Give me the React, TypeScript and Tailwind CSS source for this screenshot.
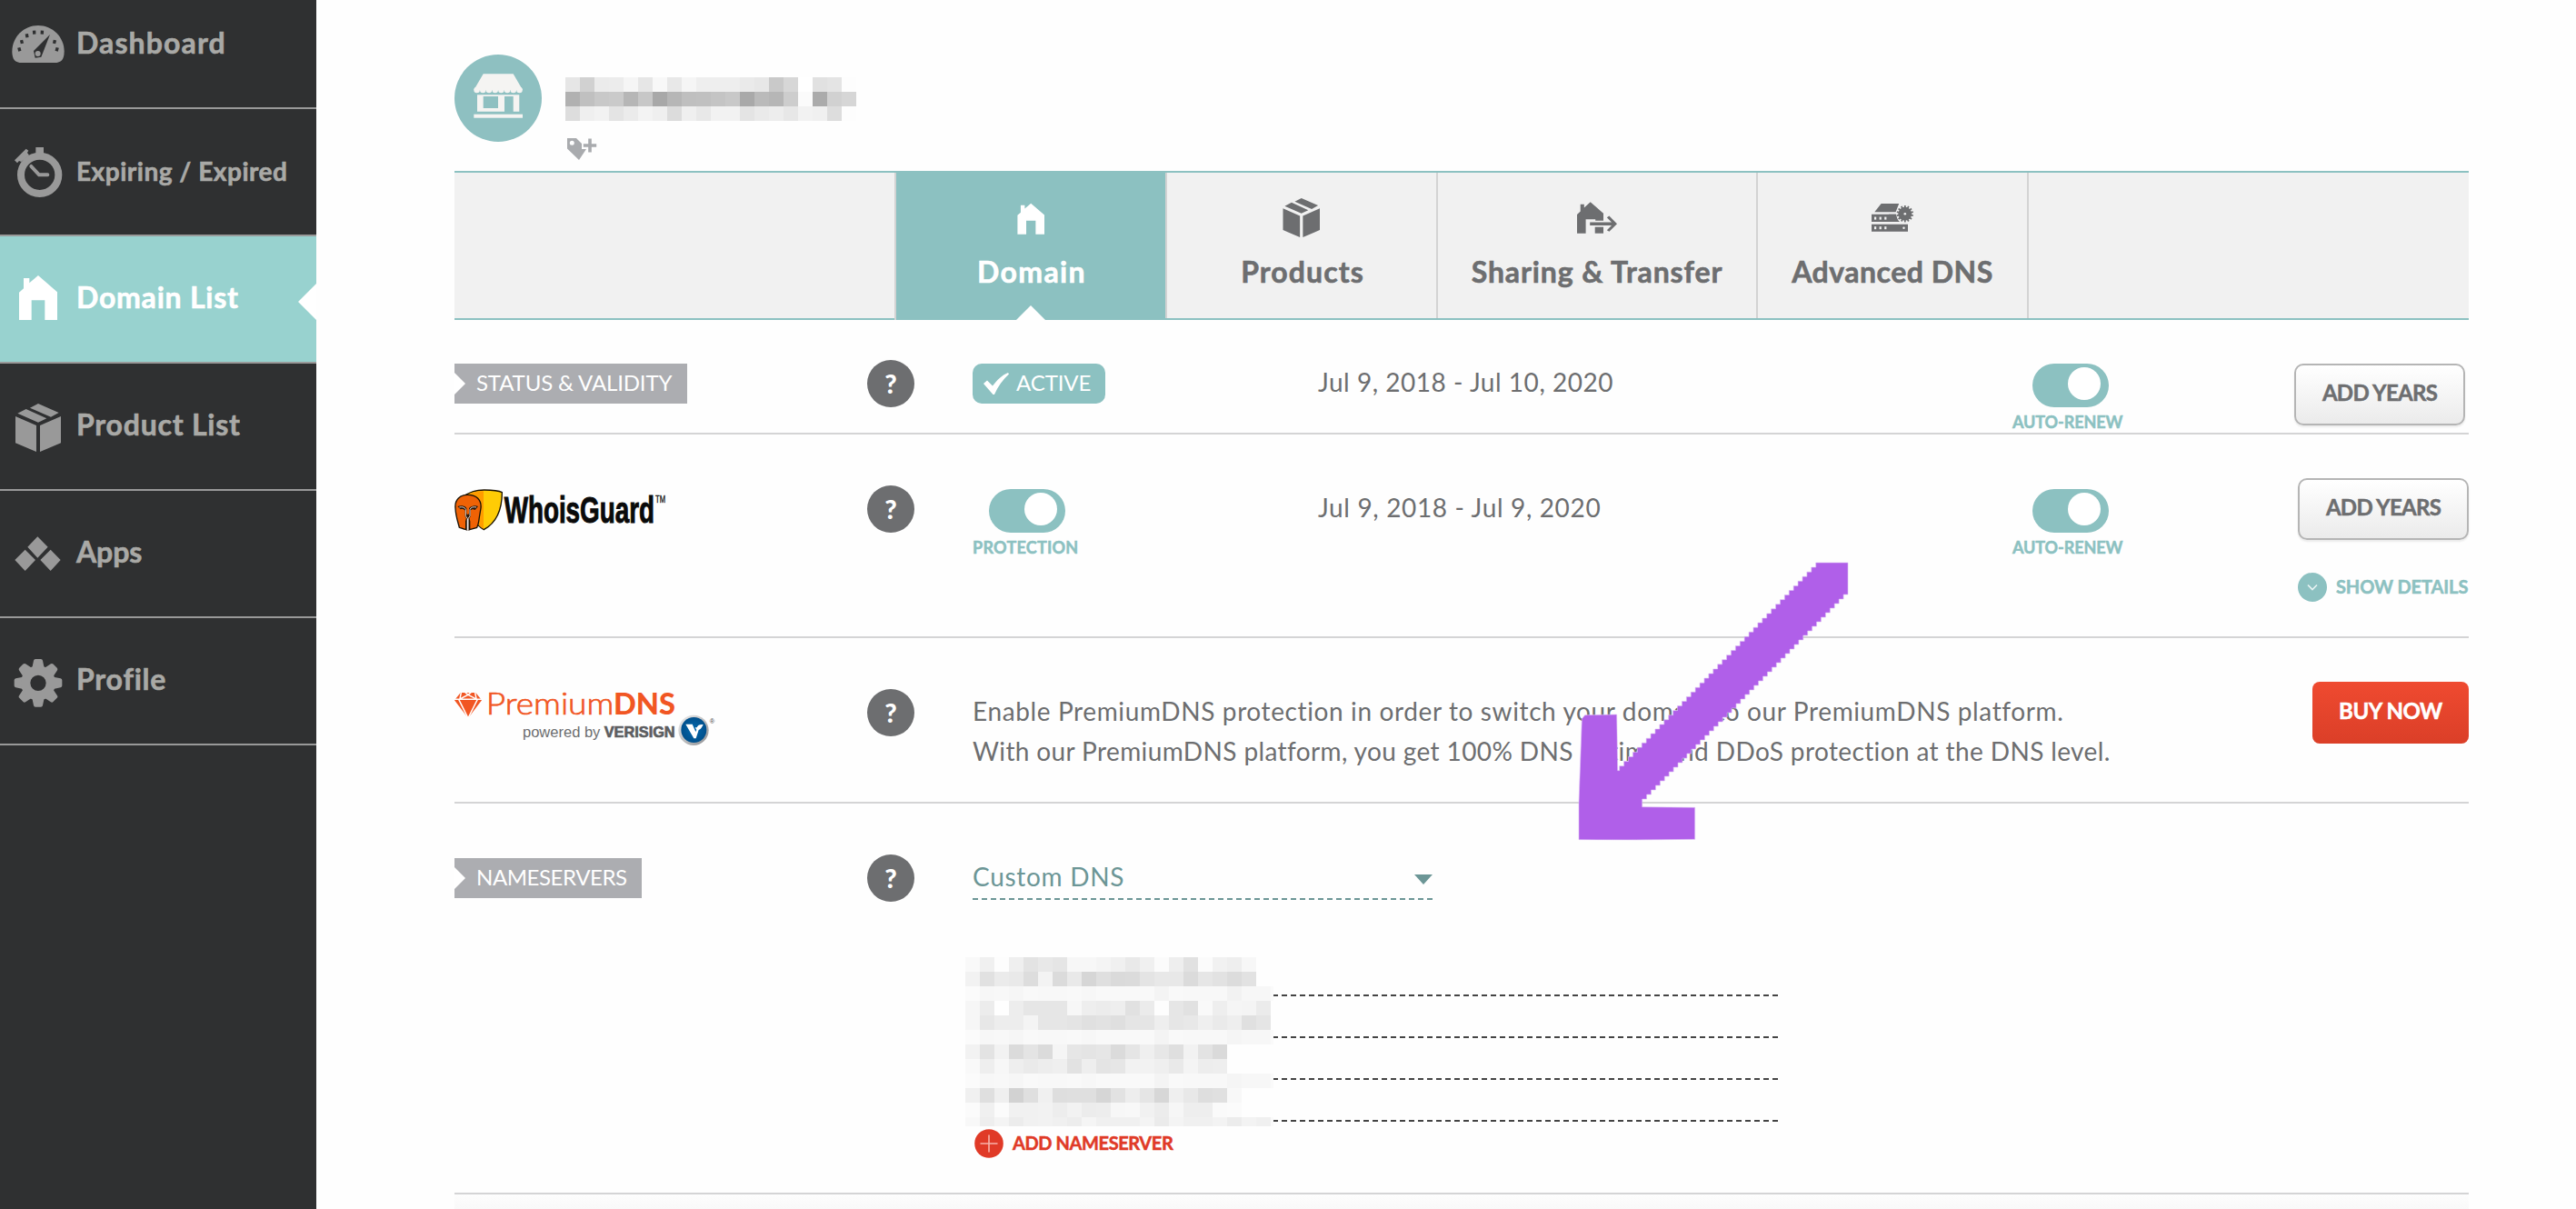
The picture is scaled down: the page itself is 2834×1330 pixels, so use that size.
import React from "react";

const HOUSE =
  "M126 909L189 964V1056H148V991H104V1056H63V965L78 952V918H97V934Z";
const CUBE =
  "M126 132L194 162L168 176L99 146ZM86 150L154 181L126 194L58 164ZM51 174L120 204V291L51 262ZM201 174L132 204V291L201 262Z";

function DashboardIcon() {
  const dots = [[64, 163], [72, 138], [89, 118], [113, 107], [139, 107], [180, 138], [188, 163]];
  return (
    <g transform="scale(.3333) translate(0 60)">
      <path fill="#999" d="M40 170C40 122 79 84 126 84S212 122 212 170C212 196 202 207 180 207H72C50 207 40 196 40 170Z" />
      {dots.map(([x, y], i) => (
        <rect key={i} x={x - 5} y={y - 6} width="10" height="12" fill="#2f3031" transform={`rotate(${(x - 126) * 0.25} ${x} ${y})`} />
      ))}
      <path fill="#2f3031" d="M165 114L111 168L116 191L136 188Z" />
      <circle cx="125" cy="177" r="9" fill="#999" />
    </g>
  );
}

function StopwatchIcon() {
  return (
    <g transform="scale(.3333) translate(0 -360)" fill="#999">
      <circle cx="131" cy="577" r="62" fill="none" stroke="#999" strokeWidth="24" />
      <rect x="118" y="486" width="26" height="24" />
      <path d="M86 491L94 497L90 504L96 512L70 534L63 531L57 538L48 529Z" />
      <path d="M103 549L129 577H157" fill="none" stroke="#999" strokeWidth="12" strokeLinecap="round" />
    </g>
  );
}

function GearIcon() {
  return (
    <g transform="scale(.3333) translate(0 -840)" fill="#999">
      {[0, 45, 90, 135, 180, 225, 270, 315].map((a) => (
        <path key={a} d="M106 1004L111 980Q112 975 117 975H135Q140 975 141 980L146 1004Z" transform={`rotate(${a} 126 1054)`} />
      ))}
      <circle cx="126" cy="1054" r="41.5" fill="none" stroke="#999" strokeWidth="31" />
    </g>
  );
}

type Item = { label: string; text: string; icon: React.ReactNode; active?: boolean };
const NAV: Item[] = [
  { label: "Dashboard", text: "text-[32px] tracking-[1.12px] pt-[47px]", icon: <DashboardIcon /> },
  { label: "Expiring / Expired", text: "text-[28px] tracking-[0.52px] pt-[48px]", icon: <StopwatchIcon /> },
  { label: "Domain List", text: "text-[32px] tracking-[0.77px] pt-[47px]", active: true, icon: <path d={HOUSE} fill="#fff" transform="scale(.3333) translate(0 -780)" /> },
  { label: "Product List", text: "text-[32px] tracking-[0.77px] pt-[47px]", icon: <path d={CUBE} fill="#999" transform="scale(.3333)" /> },
  {
    label: "Apps", text: "text-[32px] tracking-[-0.1px] pt-[47px]",
    icon: <path fill="#999" transform="scale(.3333) translate(0 -420)" d="M124 571L158 605L124 641L91 605ZM83 614L117 648L83 684L49 648ZM167 614L200 648L167 684L133 648Z" />,
  },
  { label: "Profile", text: "text-[32px] tracking-[0.8px] pt-[47px]", icon: <GearIcon /> },
];

function Sidebar() {
  return (
    <nav className="h-[1330px] w-[348px] shrink-0 overflow-hidden bg-[#2f3031]">
      <ul className="-mt-5">
        {NAV.map((n) => (
          <li
            key={n.label}
            className={
              n.active
                ? "relative flex h-[140px] border-b-2 border-[#999] bg-[#98d2cf] font-bold text-white [-webkit-text-stroke:0.6px]"
                : "relative flex h-[140px] border-b-2 border-[#999] font-bold text-[#a9a9a6] [-webkit-text-stroke:0.6px]"
            }
          >
            <svg width="84" height="138" className="shrink-0">{n.icon}</svg>
            <span className={`whitespace-nowrap leading-10 ${n.text}`}>{n.label}</span>
            {n.active && (
              <svg width="20" height="40" className="absolute right-0 top-[52px]">
                <path d="M20 0V40L0 20Z" fill="#fff" />
              </svg>
            )}
          </li>
        ))}
      </ul>
    </nav>
  );
}

const NAME_PIXELS = [
  "e6 d1 eb ec f5 e6 f8 e8 f5 ee ee ee ea e7 c9 d7 ff e1 e4 fd",
  "b1 c0 c8 ca b6 c7 a8 b6 bf c0 c4 c8 a9 ba b6 cd fb ab d1 d6",
  "dd ef f2 e4 eb f3 ef dc ef e8 f2 f2 e4 ea ed e7 f2 f0 dd fd",
];
const SERVER_PIXELS = [
  "f9 f0 fd ef e3 e8 e5 f7 f7 f4 f0 e9 f0 fb ee e1 fb f1 ee f7 fe fe",
  "f2 e1 eb e9 dd f3 db e9 d6 df da db e4 e8 e8 db e6 e2 dc e2 fe fe",
  "fb f7 f8 f6 f9 f8 f8 f9 f7 f9 f9 f9 f9 f4 f9 f8 f8 f8 f2 f7 f7 fa",
  "f6 ec fe ed e6 e6 e6 f7 ee ec ee e1 eb fd e6 e1 f9 ee f5 f4 eb fe",
  "f6 e7 ed ed f4 e6 e6 e4 e0 e2 df e5 e5 ee e6 e8 ef ea ee e0 e5 fe",
  "fb f7 f8 f6 f9 f8 f8 f9 f7 f9 f9 f9 f9 f4 f9 f8 f8 f8 f5 f7 f7 fa",
  "f2 e3 f2 db e4 db f5 e6 e4 e6 db e5 ef e7 df f2 e3 da fe fe fe fe",
  "f9 ee f7 ee ea ed ef e2 ee e4 e6 f2 f2 ef e9 f4 ed ee fe fe fe fe",
  "fb f7 f8 f6 f9 f8 f8 f9 f7 f9 f9 f9 f9 f4 f9 f8 f8 f8 f5 f7 f7 fa",
  "f0 df ef d2 df f0 de df df d6 e2 ed e5 d7 ef e8 de e0 f8 fe fe fe",
  "fb f0 fb f1 f1 f2 ed f2 ec ed f7 f8 f1 ec f6 ee ee fa fb fe fe fe",
  "f8 ee f4 ec f1 f2 f0 ed f5 f0 f0 f0 f4 eb f4 f0 f0 f3 ec f3 f0 fa",
];

function Mosaic({ rows }: { rows: string[] }) {
  return (
    <div>
      {rows.map((r, i) => (
        <div key={i} className="flex h-4">
          {r.split(" ").map((c, j) => (
            <span key={j} className="w-4 shrink-0" style={{ backgroundColor: `#${c}${c}${c}` }} />
          ))}
        </div>
      ))}
    </div>
  );
}

function StoreIcon() {
  const scallops = [0, 1, 2, 3, 4, 5, 6, 7];
  return (
    <svg width="96" height="96" className="rounded-full bg-[#8ec0c1]">
      <g fill="#f5f4f2">
        <path d="M31.7 21.3H64.7L75 39H21.3Z" />
        {scallops.map((i) => (
          <circle key={i} cx={24.6 + i * 6.7} cy="39" r="3.3" />
        ))}
        <path fillRule="evenodd" d="M25 44.3H71.3V62.7H64.7V46H55V62.7H25ZM31.7 46V59H48V46Z" />
        <rect x="21.3" y="65.7" width="53.7" height="4" />
      </g>
    </svg>
  );
}

function Header() {
  return (
    <header className="flex h-[188px] gap-[26px] pt-[60px]">
      <StoreIcon />
      <div className="pt-[25px]">
        <Mosaic rows={NAME_PIXELS} />
        <svg width="33" height="24" className="ml-[2px] mt-[19px]" fill="#a9abae">
          <path fillRule="evenodd" d="M0 0H10L16 6V12H21L13 24L0 11.5ZM5.3 2.8A2.5 2.5 0 1 0 5.3 7.8A2.5 2.5 0 1 0 5.3 2.8Z" />
          <path d="M23.2 .5H26.8V6.2H32.2V9.8H26.8V15.5H23.2V9.8H17.8V6.2H23.2Z" />
        </svg>
      </div>
    </header>
  );
}

function SharingIcon() {
  return (
    <g fill="#6d6e70">
      <path d="M16.7 6.3L31 18.7V26.7H22.2V25.3H11.6V40.7H2V20L5.7 16.5V8.7H9.8V12.5Z" />
      <path d="M16.2 28.4H40L34.8 23.2L37.4 21.6L46 30.2L37.4 38.8L34.8 37.2L40 32H16.2Z" />
      <rect x="21.7" y="33.7" width="9.3" height="7" />
    </g>
  );
}

function ServerIcon() {
  const teeth = Array.from({ length: 14 }, (_, i) => (i * 360) / 14);
  return (
    <g fill="#6d6e70">
      <path d="M11.6 8H31.2L27.6 17.3H4.3Z" />
      <path d="M1 19.7H29V28H1ZM1 30.7H41V38.7H1Z" />
      <circle cx="37.8" cy="19.2" r="10" fill="#f1f1f1" />
      <path d="M20 19.7H28Q28.6 25 32 28H20Z" />
      <circle cx="37.8" cy="19.2" r="7.4" />
      {teeth.map((a) => (
        <rect key={a} x="36.9" y="10" width="1.8" height="3" transform={`rotate(${a} 37.8 19.2)`} />
      ))}
      <g fill="#f1f1f1">
        {[4, 9.6, 15.2].map((x) => (
          <React.Fragment key={x}>
            <rect x={x} y="22.6" width="2.2" height="3" />
            <rect x={x} y="33.2" width="2.2" height="3" />
          </React.Fragment>
        ))}
        <circle cx="37.8" cy="19.2" r="1.3" />
        <circle cx="36.5" cy="34.7" r="1.2" />
      </g>
    </g>
  );
}

function Tab({ label, w, t, active, children }: { label: string; w: string; t: string; active?: boolean; children: React.ReactNode }) {
  return (
    <div className={`relative flex flex-col items-center border-l-2 border-[#d3d3d3] pt-[26px] font-bold [-webkit-text-stroke:0.6px] ${w} ${active ? "-mb-[2px] bg-[#8cc1c1] text-white" : "text-[#6d6e70]"}`}>
      <svg width="48" height="48">{children}</svg>
      <span className={`mt-[15px] whitespace-nowrap text-[32px] leading-10 ${t}`}>{label}</span>
      {active && (
        <svg width="32" height="16" className="absolute bottom-0 left-[132px]">
          <path d="M16 0L32 16H0Z" fill="#fff" />
        </svg>
      )}
    </div>
  );
}

function Tabs() {
  return (
    <div className="flex h-[164px] border-y-2 border-[#8cc1c1] bg-[#f1f1f1]">
      <div className="w-[484px]" />
      <Tab label="Domain" w="w-[298px]" t="pl-[2px] tracking-[1.38px]" active>
        <path d={HOUSE} fill="#fff" transform="translate(9.4 7.7) scale(.235 .232) translate(-63 -909)" />
      </Tab>
      <Tab label="Products" w="w-[298px]" t="pl-[2px] tracking-[1.08px]">
        <path d={CUBE} fill="#6d6e70" transform="translate(3.5 2) scale(.27) translate(-51 -132)" />
      </Tab>
      <Tab label="Sharing & Transfer" w="w-[352px]" t="tracking-[0.9px]"><SharingIcon /></Tab>
      <Tab label="Advanced DNS" w="w-[298px]" t="tracking-[0.5px]"><ServerIcon /></Tab>
      <div className="flex-1 border-l-2 border-[#d3d3d3]" />
    </div>
  );
}

function Ribbon({ label, w, t }: { label: string; w: string; t: string }) {
  return (
    <div className={`relative h-11 whitespace-nowrap bg-[#acadb1] text-2xl/[42px] text-white ${w} ${t}`}>
      {label}
      <svg width="12" height="24" className="absolute left-0 top-[10px]">
        <path d="M0 0L12 12L0 24Z" fill="#fff" />
      </svg>
    </div>
  );
}

function Help() {
  return (
    <div className="flex size-[52px] items-center justify-center rounded-full bg-[#6d6e70] text-[29px]/[52px] font-black text-white">
      <span className="-mt-px">?</span>
    </div>
  );
}

function Toggle({ label, ml, t }: { label: string; ml: string; t: string }) {
  return (
    <div>
      <div className={`flex h-12 w-[84px] justify-end rounded-full bg-[#8cc1c1] pr-[9px] pt-1 ${ml}`}>
        <div className="size-9 rounded-full bg-white" />
      </div>
      <div className={`mt-1 whitespace-nowrap text-[18px] leading-6 font-bold text-[#8cc1c1] [-webkit-text-stroke:0.5px] ${t}`}>{label}</div>
    </div>
  );
}

function AddYears() {
  return (
    <button className="block h-[68px] w-[188px] rounded-[10px] border-2 border-[#b5b5b5] bg-linear-to-b from-white to-[#ebebeb] pb-[5px] text-2xl/[58px] font-bold tracking-[-0.72px] whitespace-nowrap text-[#6d6e70] shadow-[0_2px_2px_rgba(0,0,0,0.08)] [-webkit-text-stroke:0.5px]">
      ADD YEARS
    </button>
  );
}

function WhoisGuardLogo() {
  return (
    <svg width="240" height="50" viewBox="0 0 720 150" className="overflow-visible">
      <g transform="translate(-30 -39)">
        <path d="M67 58C82 50 96 42 128 42C155 42 176 44 187 50C187 96 177 145 127 173C104 160 70 120 67 58Z" fill="#ffcc05" stroke="#1a1205" strokeWidth="4" />
        <path d="M70 60C84 52 100 46 126 46V170C104 160 74 118 70 60Z" fill="#ff9c00" />
        <path d="M33 102C30 74 48 58 74 58C102 58 120 74 117 102L112 132C110 150 108 158 104 166L80 173V146L76 130H72L68 146V173L46 166C44 156 34 130 33 102Z" fill="#ef6205" stroke="#1a1205" strokeWidth="4" />
        <path d="M40 96C54 92 64 94 70 102V120L74 124L78 120V102C86 94 98 92 108 96L98 108C90 104 86 106 83 110V130L74 142L65 130V110C60 104 56 104 50 106Z" fill="#2a1608" />
        <path d="M46 99C56 97 64 99 67 106V128L74 138L81 128V106C84 99 92 97 102 99" fill="none" stroke="#d9d4cf" strokeWidth="3" />
        <path d="M74 138V176" stroke="#2a1608" strokeWidth="9" />
        <path d="M74 138V176" stroke="#eee" strokeWidth="5" />
        <text x="194" y="151" fontFamily="Liberation Sans" fontWeight="bold" fontSize="122" textLength="496" lengthAdjust="spacingAndGlyphs" fill="#0a0a0a" stroke="#0a0a0a" strokeWidth="3">WhoisGuard</text>
        <text x="693" y="85" fontFamily="Liberation Sans" fontSize="32" textLength="33" lengthAdjust="spacingAndGlyphs" fill="#111" stroke="#111">TM</text>
      </g>
    </svg>
  );
}

function PremiumLogo() {
  return (
    <svg width="290" height="60" viewBox="0 0 870 180" className="overflow-visible">
      <defs>
        <linearGradient id="rim" x1="0" y1="0" x2="1" y2="1">
          <stop offset="0" stopColor="#f0f0f0" />
          <stop offset="1" stopColor="#8c8e91" />
        </linearGradient>
        <radialGradient id="disc">
          <stop offset="0" stopColor="#0268ae" />
          <stop offset="1" stopColor="#01508c" />
        </radialGradient>
      </defs>
      <g transform="translate(-30 -711)">
        <path d="M50 711H100L120 736L75 795L30 736Z" fill="#f15623" />
        <path d="M30 733H46L75 718L104 733H120M46 733H104M44 733L75 795L106 733M52 711L48 731M98 711L102 731M63 708L75 718L87 708" fill="none" stroke="#fff" strokeWidth="4.5" />
        <text x="134" y="782" fontFamily="Lato" fontWeight="300" fontSize="98" textLength="422" lengthAdjust="spacingAndGlyphs" fill="#f15623" stroke="#f15623" strokeWidth="2">Premium</text>
        <text x="555" y="782" fontFamily="Lato" fontWeight="900" fontSize="98" textLength="204" lengthAdjust="spacingAndGlyphs" fill="#f15623">DNS</text>
        <text x="255" y="858" fontFamily="Liberation Sans" fontSize="48" textLength="256" lengthAdjust="spacingAndGlyphs" fill="#6d6e70">powered by</text>
        <text x="524" y="858" fontFamily="Liberation Sans" fontWeight="bold" fontSize="49" textLength="234" lengthAdjust="spacingAndGlyphs" fill="#5c5d5f" stroke="#5c5d5f" strokeWidth="2">VERISIGN</text>
        <circle cx="819" cy="835" r="50" fill="url(#rim)" />
        <circle cx="820" cy="834" r="42" fill="url(#disc)" />
        <path d="M793 815H815L826 840L829 834L824 826H830C832 818 840 815 851 816C846 826 843 832 836 834L827 862H820Z" fill="#fff" />
        <text x="872" y="812" fontFamily="Liberation Sans" fontSize="22" fill="#444">®</text>
      </g>
    </svg>
  );
}

const ROW = "grid grid-cols-[454px_116px_380px_764px_1fr] items-start border-b-2 border-[#d4d4d5]";

function arrowPath() {
  // Stair-stepped shaft: 46 steps down the lower edge, 44 back up the upper one.
  let d = "M999 162";
  for (let i = 1; i <= 46; i++) d += `H${999 - i * 14.76}V${162 + i * 15}`;
  d += "V863L494 865V970Q300 973 111 971V850L121 572L131 560L236 558L239 743H245V728";
  for (let i = 1; i <= 44; i++) d += `H${245 + i * 14.73}V${728 - i * 15.25}`;
  return `${d}H999Z`;
}

function Arrow() {
  return (
    <svg width="380" height="340" viewBox="0 0 1140 1020" className="pointer-events-none absolute left-[1700px] top-[600px]">
      <path d={arrowPath()} fill="#b05fe9" stroke="#dcbcf5" strokeOpacity="0.6" strokeWidth="3" />
    </svg>
  );
}

export default function App() {
  return (
    <div className="relative flex h-[1330px] w-[2834px] overflow-hidden bg-[#fefefe] font-[Lato,sans-serif] text-[#6d6e70]">
      <Sidebar />
      <main className="ml-[152px] w-[2216px]">
        <Header />
        <Tabs />

        <section className={`${ROW} h-[126px]`}>
          <div className="mt-12"><Ribbon label="STATUS & VALIDITY" w="w-[256px]" t="pl-6 tracking-[-0.15px]" /></div>
          <div className="mt-11"><Help /></div>
          <div className="mt-12 flex h-11 w-[146px] rounded-[10px] bg-[#8cc1c1] pl-3 text-2xl/[42px] tracking-[-0.1px] text-white">
            <svg width="28" height="24" className="mr-2 mt-[10px]">
              <path d="M0 12L4 8.5L10 14.5C15 8 20 3 27 0L28 1.5C21 8 16 15 12 24H10.5Z" fill="#fff" />
            </svg>
            ACTIVE
          </div>
          <div className="mt-[46px] whitespace-nowrap text-[28px]/[44px] tracking-[0.53px]">Jul 9, 2018 - Jul 10, 2020</div>
          <div className="mt-12 flex justify-between pr-1">
            <Toggle label="AUTO-RENEW" ml="ml-[22px]" t="tracking-[-0.1px]" />
            <AddYears />
          </div>
        </section>

        <section className={`${ROW} h-[224px]`}>
          <div className="mt-[60px]"><WhoisGuardLogo /></div>
          <div className="mt-14"><Help /></div>
          <div className="mt-[60px]"><Toggle label="PROTECTION" ml="ml-[18px]" t="tracking-[0.25px]" /></div>
          <div className="mt-[58px] whitespace-nowrap text-[28px]/[44px] tracking-[0.65px]">Jul 9, 2018 - Jul 9, 2020</div>
          <div className="mt-12 flex justify-between">
            <div className="mt-3"><Toggle label="AUTO-RENEW" ml="ml-[22px]" t="tracking-[-0.1px]" /></div>
            <div>
              <AddYears />
              <div className="mt-9 flex gap-[10px] text-xl/[30px] font-bold tracking-[-0.1px] whitespace-nowrap text-[#8cc1c1] [-webkit-text-stroke:0.5px]">
                <svg width="32" height="32" className="shrink-0">
                  <circle cx="16" cy="16" r="16" fill="#8cc1c1" />
                  <path d="M11 13.5L16 18.5L21 13.5" fill="none" stroke="#e8f3f3" strokeWidth="1.6" />
                </svg>
                SHOW DETAILS
              </div>
            </div>
          </div>
        </section>

        <section className={`${ROW} h-[182px]`}>
          <div className="mt-[60px]"><PremiumLogo /></div>
          <div className="mt-14"><Help /></div>
          <div className="col-span-2 mt-[58px] whitespace-nowrap text-[28px]/[44px]">
            <p className="tracking-[0.62px]">Enable PremiumDNS protection in order to switch your domain to our PremiumDNS platform.</p>
            <p className="tracking-[0.38px]">With our PremiumDNS platform, you get 100% DNS uptime and DDoS protection at the DNS level.</p>
          </div>
          <div className="mt-12 flex justify-end">
            <button className="h-[68px] w-[172px] rounded-lg bg-linear-to-b from-[#ef4a30] to-[#db3f28] pb-1 text-2xl/[64px] font-bold tracking-[-0.42px] whitespace-nowrap text-white [-webkit-text-stroke:0.5px]">
              BUY NOW
            </button>
          </div>
        </section>

        <section className={`${ROW} h-[430px]`}>
          <div className="mt-[60px]"><Ribbon label="NAMESERVERS" w="w-[206px]" t="pl-6 tracking-[-0.43px]" /></div>
          <div className="mt-14"><Help /></div>
          <div className="col-span-3 mt-[58px]">
            <div className="flex h-[46px] w-[506px] items-start justify-between text-[28px]/[44px] tracking-[0.7px] text-[#6c9696]">
              Custom DNS
              <svg width="20" height="11" className="mt-5"><path d="M0 0H20L10 11Z" fill="#6c9696" /></svg>
            </div>
            <div className="h-[2px] w-[506px] bg-[repeating-linear-gradient(90deg,#6c9696_0_6px,transparent_6px_10px)]" />
            <div className="-ml-2 mt-[63px] flex h-[186px]">
              <div className="w-[339px] overflow-hidden"><Mosaic rows={SERVER_PIXELS} /></div>
              <div className="flex flex-col gap-11 pt-[41px]">
                {[0, 1, 2, 3].map((i) => (
                  <div key={i} className="h-[2px] w-[555px] bg-[repeating-linear-gradient(90deg,#444_0_5px,transparent_5px_9px,#444_9px_10px)]" />
                ))}
              </div>
            </div>
            <div className="ml-[2px] mt-[3px] flex gap-[10px] text-xl/[30px] font-bold tracking-[-0.4px] text-[#e03a27] [-webkit-text-stroke:0.5px]">
              <svg width="32" height="32">
                <circle cx="16" cy="16" r="15.8" fill="#e03a27" />
                <path d="M16 6.5V25.5M6.5 16H25.5" stroke="#f7b3aa" strokeWidth="1.6" />
              </svg>
              ADD NAMESERVER
            </div>
          </div>
        </section>
        <div className="h-4 bg-linear-to-b from-[#fdfdfd] to-[#f9f9f9]" />
      </main>
      <Arrow />
    </div>
  );
}
